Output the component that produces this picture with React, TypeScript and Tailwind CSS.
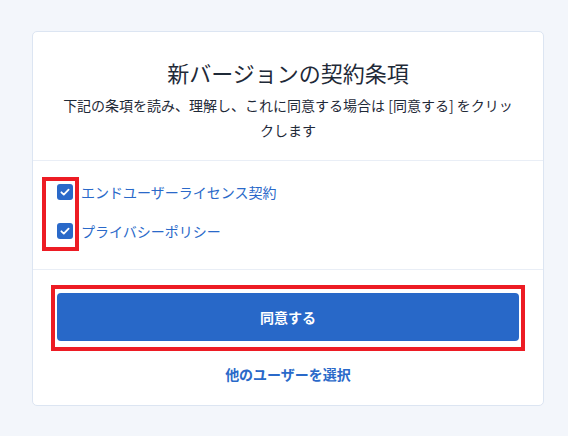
import React from 'react';

const FONT = { fontFamily: '"Noto Sans CJK JP", "Noto Sans", sans-serif' };

function Check() {
  return (
    <span className="flex h-4 w-4 shrink-0 items-center justify-center rounded-[3px] bg-[#2a69c9]">
      <svg viewBox="0 0 16 16" className="h-3 w-3" fill="none">
        <path d="M3.2 8.4 L6.4 11.4 L12.8 4.8" stroke="#fff" strokeWidth="2.4" strokeLinecap="round" strokeLinejoin="round" />
      </svg>
    </span>
  );
}

export default function App() {
  const terms = ['エンドユーザーライセンス契約', 'プライバシーポリシー'];

  return (
    <div className="min-h-[436px] w-full bg-[#f3f6fb] pt-[31px] pl-[32px]" style={FONT}>
      <div className="w-[512px] rounded-[5px] border border-[#dce5f2] bg-white">
        {/* Header */}
        <div className="px-6 pt-6 pb-[17px] text-center text-[#1f2a38]">
          <h1 className="text-[22px] leading-[33px] font-normal">新バージョンの契約条項</h1>
          <p className="mt-1 text-[14px] leading-[25px]">
            下記の条項を読み、理解し、これに同意する場合は [同意する] をクリックします
          </p>
        </div>

        {/* Terms */}
        <div className="border-t border-[#e9eef6] px-6 pt-[21px] pb-[28px]">
          <div className="relative flex flex-col gap-[19px]">
            {terms.map(t => (
              <label key={t} className="flex h-5 items-center gap-2 text-[14px] text-[#2a69c9]">
                <Check />
                <span>{t}</span>
              </label>
            ))}
            <div className="pointer-events-none absolute left-[-15px] top-[-5px] h-[74px] w-[37px] border-4 border-[#ed1c24]" />
          </div>
        </div>

        {/* Actions */}
        <div className="border-t border-[#e9eef6] px-6 pt-[23px] pb-[21px] text-center">
          <div className="relative">
            <button className="h-12 w-full rounded-[4px] bg-[#2868c8] text-[14px] font-bold text-white">
              同意する
            </button>
            <div className="pointer-events-none absolute left-[-6px] right-[-6px] top-[-8px] bottom-[-10px] border-4 border-[#ed1c24]" />
          </div>
          <div className="mt-[23px] text-[14px] leading-5 font-bold text-[#2a69c9]">他のユーザーを選択</div>
        </div>
      </div>
    </div>
  );
}
